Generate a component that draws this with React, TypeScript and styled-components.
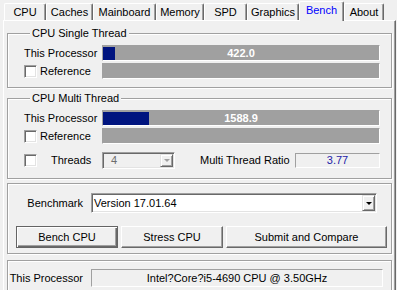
import React from 'react';
import styled, { createGlobalStyle } from 'styled-components';

const GlobalStyle = createGlobalStyle`
  html, body {
    margin: 0;
    padding: 0;
    background: #f0f0f0;
  }
  body {
    font-family: 'Liberation Sans', Arial, sans-serif;
    font-size: 11px;
    color: #000;
  }
`;

const Window = styled.div`
  width: 397px;
  height: 290px;
  overflow: hidden;
  background: #f0f0f0;
`;

const TabBar = styled.div`
  display: flex;
  align-items: flex-end;
  height: 20px;
  padding-left: 4px;
`;

const Tab = styled.div<{ $w: number; $active?: boolean }>`
  box-sizing: border-box;
  position: relative;
  z-index: ${p => (p.$active ? 1 : 0)};
  width: ${p => p.$w}px;
  height: ${p => (p.$active ? 20 : 17)}px;
  margin-bottom: ${p => (p.$active ? -1 : 0)}px;
  padding-top: 2px;
  line-height: 13px;
  text-align: center;
  white-space: nowrap;
  background: #f0f0f0;
  color: ${p => (p.$active ? '#0000ff' : '#000')};
  border-top: 1px solid #fff;
  border-left: 1px solid #fff;
  border-right: 1px solid #696969;
  border-radius: 2px 2px 0 0;
  box-shadow: inset -1px 0 0 #a0a0a0;
`;

const Panel = styled.div`
  box-sizing: border-box;
  margin-left: 3px;
  width: 393px;
  height: 270px;
  padding: 0 3px;
  border-top: 1px solid #fff;
  border-left: 1px solid #fff;
  border-right: 1px solid #696969;
  box-shadow: inset -1px 0 0 #a0a0a0;
  display: flex;
  flex-direction: column;
`;

const Group = styled.fieldset<{ $gap: number; $pad: string }>`
  flex: none;
  margin: ${p => p.$gap}px 0 0 0;
  padding: ${p => p.$pad};
  border: 1px solid #a0a0a0;
  box-shadow: inset 1px 1px 0 #fff, 1px 1px 0 #fff;
  min-inline-size: 0;
  display: flex;
  flex-direction: column;
`;

const Legend = styled.legend`
  margin-left: 6px;
  padding: 0 2px;
  line-height: 13px;
  background: #f0f0f0;
`;

const ScoreRow = styled.div<{ $top?: number }>`
  display: grid;
  grid-template-columns: 78px 1fr;
  align-items: center;
  height: 16px;
  margin-top: ${p => p.$top ?? 0}px;
`;

const CheckLabel = styled.label`
  display: flex;
  align-items: center;
  gap: 3px;
  white-space: nowrap;
`;

const CheckBox = styled.span`
  box-sizing: border-box;
  flex: none;
  width: 13px;
  height: 13px;
  background: #fff;
  border: 1px solid;
  border-color: #a0a0a0 #fff #fff #a0a0a0;
  box-shadow: inset 1px 1px 0 #696969, inset -1px -1px 0 #e3e3e3;
`;

const Bar = styled.div`
  box-sizing: border-box;
  height: 16px;
  display: grid;
  align-items: center;
  background: #a0a0a0;
  border: 1px solid;
  border-color: #a0a0a0 #fff #fff #a0a0a0;
  & > * {
    grid-area: 1 / 1;
  }
`;

const Fill = styled.div`
  justify-self: start;
  height: 13px;
  background: #00147f;
`;

const BarValue = styled.span`
  justify-self: center;
  color: #fff;
  font-weight: bold;
  line-height: 13px;
`;

const ThreadsRow = styled.div`
  display: flex;
  align-items: center;
  height: 18px;
  margin-top: 7px;
`;

const CheckCell = styled.div`
  width: 27px;
  flex: none;
  display: flex;
  align-items: center;
`;

const Label = styled.span<{ $w?: number }>`
  flex: ${p => (p.$w ? 'none' : '1')};
  width: ${p => (p.$w ? `${p.$w}px` : 'auto')};
  white-space: nowrap;
`;

const Combo = styled.div<{ $w: number; $h: number; $disabled?: boolean }>`
  box-sizing: border-box;
  flex: none;
  width: ${p => p.$w}px;
  height: ${p => p.$h}px;
  display: flex;
  align-items: center;
  padding: 0 1px 0 ${p => (p.$disabled ? 8 : 2)}px;
  background: ${p => (p.$disabled ? '#f0f0f0' : '#fff')};
  color: ${p => (p.$disabled ? '#6d6d6d' : '#000')};
  border: 1px solid;
  border-color: #a0a0a0 #fff #fff #a0a0a0;
  box-shadow: inset 1px 1px 0 #696969, inset -1px -1px 0 #e3e3e3;
`;

const ComboText = styled.span`
  flex: 1;
  white-space: nowrap;
`;

const ArrowButton = styled.div<{ $disabled?: boolean }>`
  box-sizing: border-box;
  flex: none;
  width: 13px;
  height: calc(100% - 2px);
  display: flex;
  align-items: center;
  justify-content: center;
  background: #f0f0f0;
  border: 1px solid;
  border-color: #e3e3e3 #696969 #696969 #e3e3e3;
  box-shadow: inset 1px 1px 0 #fff, inset -1px -1px 0 #a0a0a0;
  &::after {
    content: '';
    border-left: 3px solid transparent;
    border-right: 3px solid transparent;
    border-top: 3px solid ${p => (p.$disabled ? '#a0a0a0' : '#000')};
    margin-top: 1px;
  }
`;

const ValueBox = styled.div<{ $w: number; $h: number; $color?: string }>`
  box-sizing: border-box;
  flex: none;
  width: ${p => p.$w}px;
  height: ${p => p.$h}px;
  display: flex;
  align-items: center;
  justify-content: center;
  white-space: nowrap;
  color: ${p => p.$color ?? '#000'};
  border: 1px solid;
  border-color: #a0a0a0 #fff #fff #a0a0a0;
`;

const FieldRow = styled.div<{ $h: number }>`
  display: grid;
  grid-template-columns: 79px auto;
  align-items: center;
  height: ${p => p.$h}px;
`;

const FieldLabel = styled.span`
  display: flex;
  justify-content: flex-end;
  padding-right: 8px;
  white-space: nowrap;
`;

const ButtonRow = styled.div`
  display: flex;
  gap: 3px;
  margin-top: 13px;
  margin-left: 4px;
`;

const Button = styled.button<{ $w?: number; $default?: boolean }>`
  box-sizing: border-box;
  flex: ${p => (p.$w ? 'none' : '1')};
  width: ${p => (p.$w ? `${p.$w}px` : 'auto')};
  height: 22px;
  padding: 0;
  font: inherit;
  color: #000;
  background: #f0f0f0;
  border: 1px solid;
  border-color: ${p => (p.$default ? '#646464' : '#fff #696969 #696969 #fff')};
  box-shadow: ${p =>
    p.$default
      ? 'inset 1px 1px 0 #fff, inset -1px -1px 0 #696969, inset -2px -2px 0 #a0a0a0'
      : 'inset -1px -1px 0 #a0a0a0'};
`;

const tabs: [string, number][] = [
  ['CPU', 42],
  ['Caches', 47],
  ['Mainboard', 63],
  ['Memory', 48],
  ['SPD', 43],
  ['Graphics', 52],
  ['Bench', 45],
  ['About', 40],
];

const maxScore = 9500;

function Score({ value }: { value?: number }) {
  return (
    <Bar>
      {value !== undefined && (
        <>
          <Fill style={{ width: `${(value / maxScore) * 100}%` }} />
          <BarValue>{value.toFixed(1)}</BarValue>
        </>
      )}
    </Bar>
  );
}

export default function App() {
  return (
    <Window>
      <GlobalStyle />
      <TabBar>
        {tabs.map(([name, w]) => (
          <Tab key={name} $w={w} $active={name === 'Bench'}>
            {name}
          </Tab>
        ))}
      </TabBar>
      <Panel>
        <Group $gap={6} $pad="5px 11px 8px 16px">
          <Legend>CPU Single Thread</Legend>
          <ScoreRow>
            <span>This Processor</span>
            <Score value={422.0} />
          </ScoreRow>
          <ScoreRow $top={2}>
            <CheckLabel>
              <CheckBox />
              Reference
            </CheckLabel>
            <Score />
          </ScoreRow>
        </Group>

        <Group $gap={4} $pad="5px 11px 9px 16px">
          <Legend>CPU Multi Thread</Legend>
          <ScoreRow>
            <span>This Processor</span>
            <Score value={1588.9} />
          </ScoreRow>
          <ScoreRow $top={2}>
            <CheckLabel>
              <CheckBox />
              Reference
            </CheckLabel>
            <Score />
          </ScoreRow>
          <ThreadsRow>
            <CheckCell>
              <CheckBox />
            </CheckCell>
            <Label $w={51}>Threads</Label>
            <Combo $w={73} $h={17} $disabled>
              <ComboText>4</ComboText>
              <ArrowButton $disabled />
            </Combo>
            <Label style={{ marginLeft: 25 }}>Multi Thread Ratio</Label>
            <ValueBox $w={85} $h={15} $color="#2323a8">
              3.77
            </ValueBox>
          </ThreadsRow>
        </Group>

        <Group $gap={4} $pad="9px 4px 5px 4px">
          <FieldRow $h={20}>
            <FieldLabel>Benchmark</FieldLabel>
            <Combo $w={286} $h={20}>
              <ComboText>Version 17.01.64</ComboText>
              <ArrowButton />
            </Combo>
          </FieldRow>
          <ButtonRow>
            <Button $w={102} $default>
              Bench CPU
            </Button>
            <Button $w={102}>Stress CPU</Button>
            <Button>Submit and Compare</Button>
          </ButtonRow>
        </Group>

        <Group $gap={6} $pad="8px 4px 24px 4px">
          <FieldRow $h={18}>
            <FieldLabel>This Processor</FieldLabel>
            <ValueBox $w={292} $h={18}>
              Intel?Core?i5-4690 CPU @ 3.50GHz
            </ValueBox>
          </FieldRow>
        </Group>
      </Panel>
    </Window>
  );
}
